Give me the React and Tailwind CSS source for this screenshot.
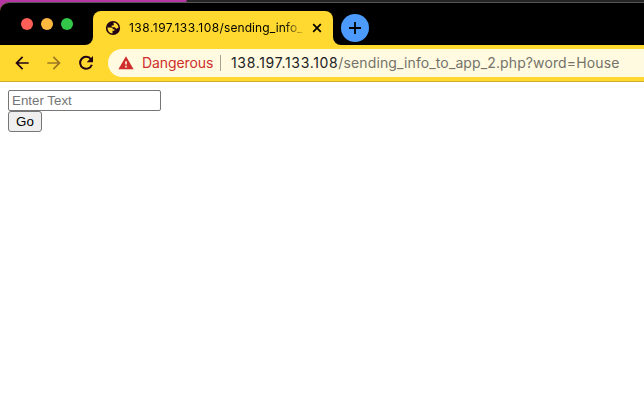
import { MdArrowBack, MdArrowForward } from "react-icons/md";

function GlobeIcon({ className }) {
  return (
    <svg viewBox="0 0 16 16" className={className}>
      <circle cx="8" cy="8" r="7.1" fill="#210315" />
      <path d="M2.500 7.500h3.300c1.500 0 2 .8 2 1.700h1.600v1.600H7.500v2.700C4.500 13.300 2.500 10.800 2.500 7.500z" fill="#ffd92f" />
      <path d="M8.300 2.500C11.500 2.600 13.500 5.100 13.500 8h-1.200l-1 .9-1.500-1.600H6.700V5.400h1.500c.8 0 .8-.5.1-2.900z" fill="#ffd92f" />
    </svg>
  );
}

function CloseIcon({ className }) {
  return (
    <svg viewBox="0 0 14 14" className={className} fill="none" stroke="#000000" strokeWidth="1.700">
      <path d="M3.200 3.200l7.600 7.600M10.800 3.200l-7.600 7.600" />
    </svg>
  );
}

function PlusIcon({ className }) {
  return (
    <svg viewBox="0 0 12 12" className={className} fill="none" stroke="#000000" strokeWidth="1.800">
      <path d="M6 0v12M0 6h12" />
    </svg>
  );
}

function ReloadIcon({ className }) {
  return (
    <svg viewBox="0 0 20 20" className={className}>
      <path d="M15 6.300A6 6 0 1 0 15.800 11.700" fill="none" stroke="#210315" strokeWidth="2" />
      <path d="M17 3v6.300h-6.300z" fill="#210315" />
    </svg>
  );
}

function WarningIcon({ className }) {
  return (
    <svg viewBox="0 0 16 16" className={className}>
      <path d="M8 1.200 15.600 14.300H.4z" fill="#cf2e2c" />
      <path d="M7.200 6.200h1.600v3.200H7.200zM7.200 10.800h1.600v1.600H7.200z" fill="#fffae0" />
    </svg>
  );
}

function TabStrip() {
  return (
    <div className="flex h-[42px] bg-[#ffd92f]">
      <div className="flex w-[93px] items-start gap-2 rounded-br-lg bg-black pl-[21px] pt-[15px]">
        <span className="size-3 rounded-full bg-[#ff5f57]" />
        <span className="size-3 rounded-full bg-[#fdb840]" />
        <span className="size-3 rounded-full bg-[#34c84a]" />
      </div>
      <div className="w-[240px] bg-black pt-2">
        <div className="flex h-[34px] items-center rounded-t-lg bg-[#ffd92f] pl-3 pr-[9px]">
          <GlobeIcon className="size-4 shrink-0" />
          <div className="ml-2 w-[178px] shrink-0 whitespace-nowrap bg-linear-to-r from-black from-87% to-transparent to-[99%] bg-clip-text text-[12px] leading-4 tracking-[0.08px] text-transparent">
            <span className="tracking-[0.48px]">138.197.133.108</span>/sending_info_
          </div>
          <CloseIcon className="ml-[3px] size-[14px] shrink-0" />
        </div>
      </div>
      <div className="flex-1 rounded-bl-lg bg-black pl-2 pt-[11px]">
        <div className="flex size-7 items-center justify-center rounded-full bg-[#4c9bfc]">
          <PlusIcon className="size-3" />
        </div>
      </div>
    </div>
  );
}

function Toolbar() {
  return (
    <div className="flex h-[37px] items-center border-b border-[#d0ad29] bg-[#ffd92f] pl-3">
      <MdArrowBack className="size-5 text-[#210315]" />
      <MdArrowForward className="ml-3 size-5 text-[#210315] opacity-45" />
      <ReloadIcon className="ml-3 size-5" />
      <div className="ml-3 flex h-7 flex-1 items-center overflow-hidden whitespace-nowrap rounded-l-full bg-[#fffae0] pl-[10px] text-[14px] leading-5">
        <WarningIcon className="size-4 shrink-0" />
        <span className="ml-2 w-[78px] tracking-[-0.1px] text-[#cf2e2c]">Dangerous</span>
        <span className="h-4 w-px bg-[#a5a294]" />
        <span className="ml-[10px] tracking-[0.12px] text-[#74726a]">
          <span className="tracking-[0.67px] text-[#202124]">138.197.133.108</span>/sending_info_to_app_2.php?word=House
        </span>
      </div>
    </div>
  );
}

export default function App() {
  return (
    <div className="h-[402px] w-[644px] overflow-hidden bg-white font-['Inter',sans-serif]">
      <div className="bg-linear-to-r from-[#b636a4] from-[186px] to-[#242424] to-[187px] pt-[2px]">
        <div className="overflow-hidden rounded-tl-[9px] border-t border-[#555555] bg-black">
          <TabStrip />
        </div>
      </div>
      <Toolbar />
      <form className="flex flex-col items-start px-2 pt-2 font-['Liberation_Sans',Arial,sans-serif] text-[13.333px] leading-[15px]" onSubmit={(e) => e.preventDefault()}>
        <input
          className="h-[21px] w-[153px] rounded-[2px] border border-[#767676] bg-white px-[3px] text-black placeholder:text-[#757575] placeholder:opacity-100"
          placeholder="Enter Text"
        />
        <button className="h-[21px] w-[34px] rounded-[3px] border border-[#767676] bg-[#efefef] text-black">Go</button>
      </form>
    </div>
  );
}
